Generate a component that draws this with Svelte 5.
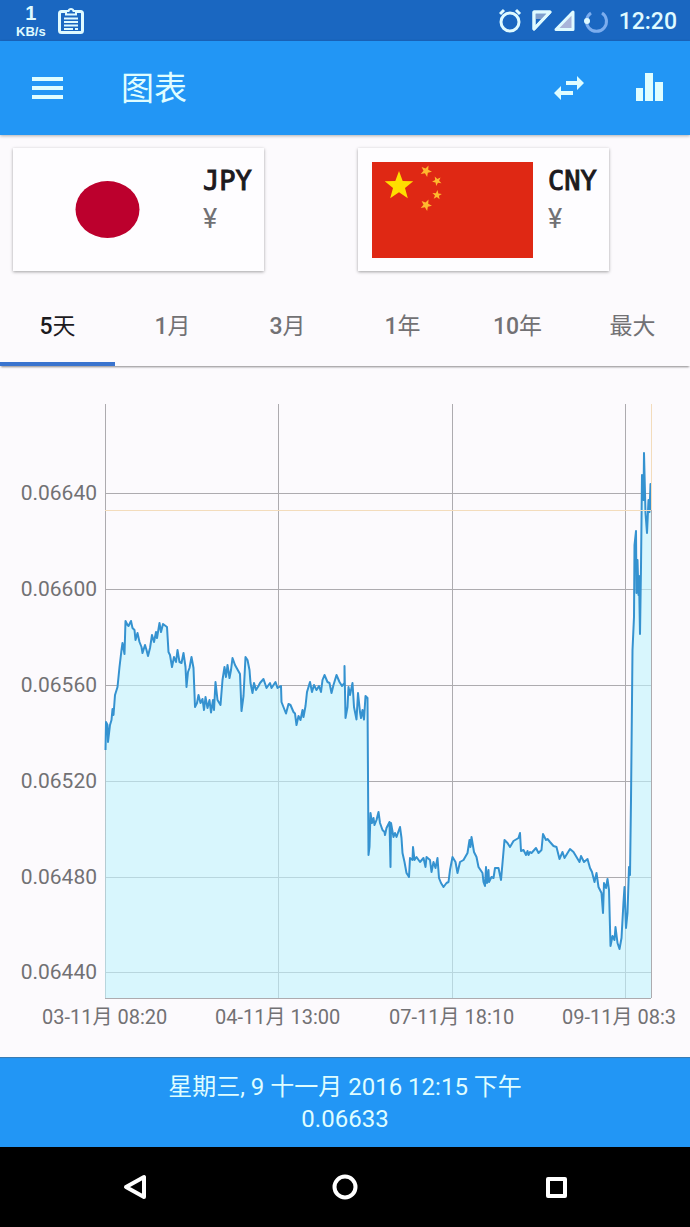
<script>

	const currencies = [
		{ code: 'JPY', symbol: '¥' },
		{ code: 'CNY', symbol: '¥' }
	];

	const ranges = [
		{ count: '5', unit: '天' },
		{ count: '1', unit: '月' },
		{ count: '3', unit: '月' },
		{ count: '1', unit: '年' },
		{ count: '10', unit: '年' },
		{ count: '', unit: '最大' }
	];

	let selected = $state(0);

	// x, y, radius, rotation of each star on the flag
	const stars = [
		[27, 24, 15, 0],
		[54, 9, 6, 25],
		[65, 19, 5, 45],
		[65, 33, 5, 5],
		[54, 43, 6, 25]
	];

	function star([x, y, r, turn]) {
		let points = [];
		for (let i = 0; i < 10; i++) {
			const radius = i % 2 ? r * 0.42 : r;
			const angle = (i * 36 + turn - 90) * Math.PI / 180;
			points.push((x + radius * Math.cos(angle)).toFixed(2) + ',' + (y + radius * Math.sin(angle)).toFixed(2));
		}
		return points.join(' ');
	}

	// Plot area
	const left = 105, right = 651, top = 404, bottom = 998;

	const rates = [
		{ y: 493, label: '0.06640' },
		{ y: 589, label: '0.06600' },
		{ y: 685, label: '0.06560' },
		{ y: 781, label: '0.06520' },
		{ y: 877, label: '0.06480' },
		{ y: 972, label: '0.06440' }
	];

	const times = [
		{ x: 105, label: '03-11月 08:20' },
		{ x: 278, label: '04-11月 13:00' },
		{ x: 452, label: '07-11月 18:10' },
		{ x: 625, label: '09-11月 08:3' }
	];

	const trace = `
		105.5,750 106,722 107.5,725 108,742 110,725 111.5,720 112.5,709 113.5,715 115,695 117.5,687
		119.5,667 121.5,650 122.5,643 124.5,654 125.5,621 127.5,625 128.5,626 131,621 132.5,628 134.5,630
		135.5,640 137.5,633 139.5,642 141.5,647 142.5,653 145,645 146.5,650 148,656 150,648 152,635
		154,642 156,632 157,638 159.5,623 161,632 163,624 167,627 168.5,652 170,655 172,667
		174,657 176,662 177.5,650 179.5,662 181.5,663 183.5,653 185.5,667 186.5,687 188,672 189.5,668
		191.5,657 193.5,668 195,707 197,703 198.5,695 200.5,703 202.5,699 204,710 205.5,697 207.5,708
		209.5,700 211,712.5 213,700 214,710 215.5,682 217.5,700 220.5,705 222.5,680 224.5,667 226,677
		227.5,665 229.5,678 231,670 232.5,658 235,665 240,674 241.5,711 243.5,696 245.5,657 247.5,660
		249.5,670 250.5,683 252.5,693 254,683 256,690 258.5,686 260,683 263.5,679 266.5,688 270,683
		271.5,688 275.5,682 277.5,688 281,686 281.5,702 286,713.5 288.5,704 290.5,705 293.5,712 295,713.5
		296.5,725 298.5,716 300.5,720 302.5,710 303.5,717 305.5,706 307,692 310,682 312,692 314,685
		316.5,690 319,686 321,692 322.5,680 324.5,675 327.5,682 329.5,683 331.5,693 333.5,685 336.5,675
		339.5,682 342,686 344.5,683 344.5,666 345.5,718 347.5,707 348.5,687 350,695 352.5,683 354,707
		356.5,719.5 358,693 360,712 361,718 362.5,710 364,719.5 365.5,696 367.5,698 368.5,855 369.5,847
		370.5,813 372,823 373.5,818 374.5,825 376.5,820 378.5,812 380,823 382.5,830 384.5,832 385,835
		386.5,828 389.5,822 390.5,867 391,823 393.5,837 395,833 396.5,837 400,827 401.5,838 402.5,853
		404.5,862 406.5,873 409,877 410,858 412.5,860 413,847 414.5,860 416.5,857 420,862 423.5,858
		425.5,867 426.5,857 430,860 431.5,872 433.5,862 435.5,868 437.5,858 439,878 441,883 443.5,887
		446.5,883 448.5,882 450,870 452.5,857 455.5,862 457.5,873 460,862 463.5,860 467.5,853 469.5,840
		470.5,847 471.5,837 474,852 476.5,857 478.5,867 482.5,873 483.5,882 485,886 486,867 487,883
		488.5,870 489,882 491.5,877 493.5,878 495,868 498.5,868 501,880 502.5,863 504.5,840 507.5,843
		510,847 513.5,841 518.5,838 520,833 521,851 523.5,850 526,855 527.5,851 528.5,855 530,852
		531.5,853 536,848 538.5,853 541.5,850 543,834 546,840 547.5,839 550,842 553.5,846 556.5,847
		559.5,859 562.5,852 564.5,858 570,849 573.5,852 576.5,857 579.5,862 581,856 584,862 587.5,859
		590,868 592,872 594.5,882 596.5,873 598.5,887 601.5,893 603,913 604,883 606,888 607.5,879
		609,890 610.5,946 612.5,936 614.5,940 615.5,927 617.5,943 619.5,949 621.5,938 623.5,902 624.5,887
		626,928 627.5,913 629,867 630,875 631,800 632.5,650 634,617 634.5,545 636,531 636.5,593
		637.5,560 638.5,595 639,576 640,634 641,567 642,475 643.5,500 644,453 645.5,513 647,533
		648.5,500 649.5,512 650.5,484 651,510
	`.trim();

	const area = `${left},${bottom} ${trace} ${right},${bottom}`;

</script>

<style>

	:global(body) {
		margin: 0;
		background: #fcfafd;
	}

	.app {
		font-family: Roboto, "Noto Sans CJK SC", sans-serif;
		color: #727174;
	}

	button {
		padding: 0;
		border: 0;
		background: none;
		color: inherit;
		font: inherit;
		cursor: pointer;
	}

	svg { display: block; }

	/* Status bar */
	.status {
		display: flex;
		justify-content: space-between;
		align-items: center;
		height: 41px;
		padding: 0 13px 0 16px;
		background: #1a67c1;
		color: #dffaff;
	}

	.status-group {
		display: flex;
		align-items: center;
	}

	.speed {
		display: flex;
		flex-direction: column;
		align-items: center;
		margin-right: 12px;
		font: bold 13px/14px "Liberation Sans", sans-serif;
	}

	.speed strong {
		font-size: 20px;
		line-height: 23px;
	}

	.clock {
		margin-left: 10px;
		padding-top: 2px;
		font-size: 23px;
		font-weight: 500;
	}

	/* App bar */
	.bar {
		position: relative;
		display: flex;
		align-items: center;
		height: 94px;
		padding: 0 25px 0 30px;
		box-sizing: border-box;
		background: #2296f5;
		box-shadow: 0 1px 3px rgba(0, 0, 0, 0.3);
		color: #dffdff;
	}

	.bar h1 {
		flex: 1;
		margin: 0 0 0 55px;
		padding-top: 2px;
		font-size: 33px;
		font-weight: 400;
		line-height: 40px;
	}

	.bar .chart-button { margin-left: 48px; }

	/* Currency cards */
	.cards {
		display: grid;
		grid-template-columns: 1fr 1fr;
		padding: 13px 0 15px;
	}

	.card {
		display: flex;
		justify-self: start;
		gap: 15px;
		width: 251px;
		height: 123px;
		margin-left: 13px;
		padding: 14px 12px 14px 14px;
		box-sizing: border-box;
		background: #fefdff;
		box-shadow: 0 1px 3px rgba(0, 0, 0, 0.36);
		text-align: left;
	}

	.card svg { flex: none; }

	.card-text {
		display: flex;
		flex-direction: column;
		font-size: 27px;
		line-height: 38px;
	}

	.card-text strong {
		color: #1c1a1e;
		font-family: "DejaVu Sans Mono", monospace;
		font-weight: 400;
		-webkit-text-stroke: 1px #1c1a1e;
	}

	/* Range tabs */
	.tabs {
		display: flex;
		height: 80px;
		box-shadow: 0 2px 2px -1px rgba(0, 0, 0, 0.45);
	}

	.tabs button {
		flex: 1;
		border-bottom: 4px solid transparent;
		font-size: 23px;
	}

	.tabs b { font-weight: 500; }

	.tabs .active {
		border-bottom-color: #3a74cf;
		color: #1c1a1e;
	}

	/* Chart */
	.chart { width: 100%; }

	.chart text { fill: #727174; }

	.rate { font-size: 21px; text-anchor: end; }
	.time { font-size: 20px; }

	.grid { stroke: #adabaf; }
	.marker { stroke: #f3dcbc; }
	.area { fill: rgba(192, 243, 253, 0.6); }

	.line {
		fill: none;
		stroke: #3592d0;
		stroke-width: 2;
		stroke-linejoin: round;
	}

	/* Selected value */
	.value {
		padding: 14px 0 12px;
		background: #2296f5;
		box-shadow: inset 0 2px 1px -1px #3c79ad;
		color: #dffdff;
		font-size: 24px;
		line-height: 32px;
		text-align: center;
	}

	/* Android navigation */
	.nav {
		display: flex;
		height: 80px;
		padding: 0 30px;
		background: #000;
	}

	.nav button {
		display: flex;
		flex: 1;
		justify-content: center;
		align-items: center;
	}

</style>

<div class="app">

	<div class="status">
		<div class="status-group">
			<div class="speed"><strong>1</strong><span>KB/s</span></div>
			<svg width="26" height="26" viewBox="0 0 26 26" fill="none" stroke="#dffaff">
				<path d="M7 3.5H3.5Q1.5 3.5 1.5 5.500V22.500Q1.500 24.500 3.500 24.500H22.500Q24.500 24.500 24.500 22.500V5.500Q24.500 3.500 22.500 3.500H19" stroke-width="3" />
				<path d="M8 6.500V3H10.500Q11 1 13 1Q15 1 15.500 3H18V6.500Z" stroke-width="2" />
				<path d="M6 10.500H20M6 14H20M6 17.500H20M6 21H15M17 21H20" stroke-width="2" />
			</svg>
		</div>
		<div class="status-group">
			<!-- Alarm, two signals, loading -->
			<svg width="110" height="26" viewBox="1 1 110 26" fill="none" stroke="#dffaff" stroke-width="3">
				<circle cx="12" cy="15" r="9" />
				<path d="M2 7L6 3M22 7L18 3" />
				<path d="M36 5H52L36 22Z" stroke-linejoin="round" />
				<path d="M37.500 6.500H49L44 12H37.500Z" fill="#7f9fcc" stroke="none" />
				<path d="M36 5H52L36 22Z" stroke-linejoin="round" />
				<path d="M75 5V22.500H58Z" fill="#a9b4d9" stroke-linejoin="round" />
				<path d="M93 6A10 10 0 1 0 104 6" stroke="#7cadee" />
				<circle cx="89" cy="14" r="3" fill="#dffaff" stroke="none" />
			</svg>
			<span class="clock">12:20</span>
		</div>
	</div>

	<header class="bar">
		<button aria-label="菜单">
			<svg width="36" height="36" viewBox="0 0 36 36" fill="currentColor">
				<path d="M2 7H33V11H2ZM2 16H33V20H2ZM2 25H33V29H2Z" />
			</svg>
		</button>
		<h1>图表</h1>
		<button aria-label="交换">
			<svg width="32" height="26" viewBox="0 0 32 26" fill="currentColor">
				<path d="M31 8L24 1V6H13V10H24V15ZM1 18L8 25V20H20V16H8V11Z" />
			</svg>
		</button>
		<button class="chart-button" aria-label="图表">
			<svg width="32" height="32" viewBox="0 0 32 32" fill="currentColor">
				<path d="M3 16H10V29H3ZM12 1H20V29H12ZM22 10H30V29H22Z" />
			</svg>
		</button>
	</header>

	<div class="cards">
		{#each currencies as currency}
			<button class="card">
				<svg width="161" height="96" viewBox="0 0 161 96">
					{#if currency.code == 'JPY'}
						<ellipse cx="80.500" cy="47.500" rx="32" ry="28.500" fill="#bc002d" />
					{:else}
						<rect width="161" height="96" fill="#df2814" />
						{#each stars as s}
							<polygon points={star(s)} fill={s[2] > 6 ? '#ffde00' : '#ffb92e'} />
						{/each}
					{/if}
				</svg>
				<span class="card-text">
					<strong>{currency.code}</strong>
					<span>{currency.symbol}</span>
				</span>
			</button>
		{/each}
	</div>

	<div class="tabs" role="tablist">
		{#each ranges as range, i}
			<button role="tab" aria-selected={selected == i} class:active={selected == i} onclick={() => selected = i}><b>{range.count}</b>{range.unit}</button>
		{/each}
	</div>

	<svg class="chart" viewBox="0 366 690 691">
		<g class="grid" shape-rendering="crispEdges">
			{#each rates as rate}
				<line x1={left} y1={rate.y} x2={right} y2={rate.y} />
			{/each}
			{#each times as time}
				<line x1={time.x} y1={top} x2={time.x} y2={bottom} />
			{/each}
		</g>
		<polygon class="area" points={area} />
		<g class="grid" shape-rendering="crispEdges">
			<line x1={left} y1={bottom} x2={right} y2={bottom} />
			<line x1={right} y1="510" x2={right} y2={bottom} />
		</g>
		<polyline class="line" points={trace} />
		<g class="marker" shape-rendering="crispEdges">
			<line x1={left} y1="510" x2={right} y2="510" />
			<line x1={right} y1={top} x2={right} y2="510" />
		</g>

		{#each rates as rate}
			<text class="rate" x="97" y={rate.y + 7}>{rate.label}</text>
		{/each}
		{#each times as time}
			<text class="time" x={time.x - 63} y="1024">{time.label}</text>
		{/each}
	</svg>

	<div class="value">
		<div>星期三, 9 十一月 2016 12:15 下午</div>
		<div>0.06633</div>
	</div>

	<nav class="nav">
		<button aria-label="返回">
			<svg width="26" height="28" viewBox="0 0 26 28" fill="none" stroke="#fff" stroke-width="4" stroke-linejoin="round">
				<path d="M4 14L22 4V24Z" />
			</svg>
		</button>
		<button aria-label="主页">
			<svg width="28" height="28" viewBox="0 0 28 28" fill="none" stroke="#fff" stroke-width="4">
				<circle cx="14" cy="14" r="10.500" />
			</svg>
		</button>
		<button aria-label="最近">
			<svg width="26" height="26" viewBox="0 0 26 26" fill="none" stroke="#fff" stroke-width="4" stroke-linejoin="round">
				<path d="M6 5H23V22H6Z" />
			</svg>
		</button>
	</nav>

</div>
